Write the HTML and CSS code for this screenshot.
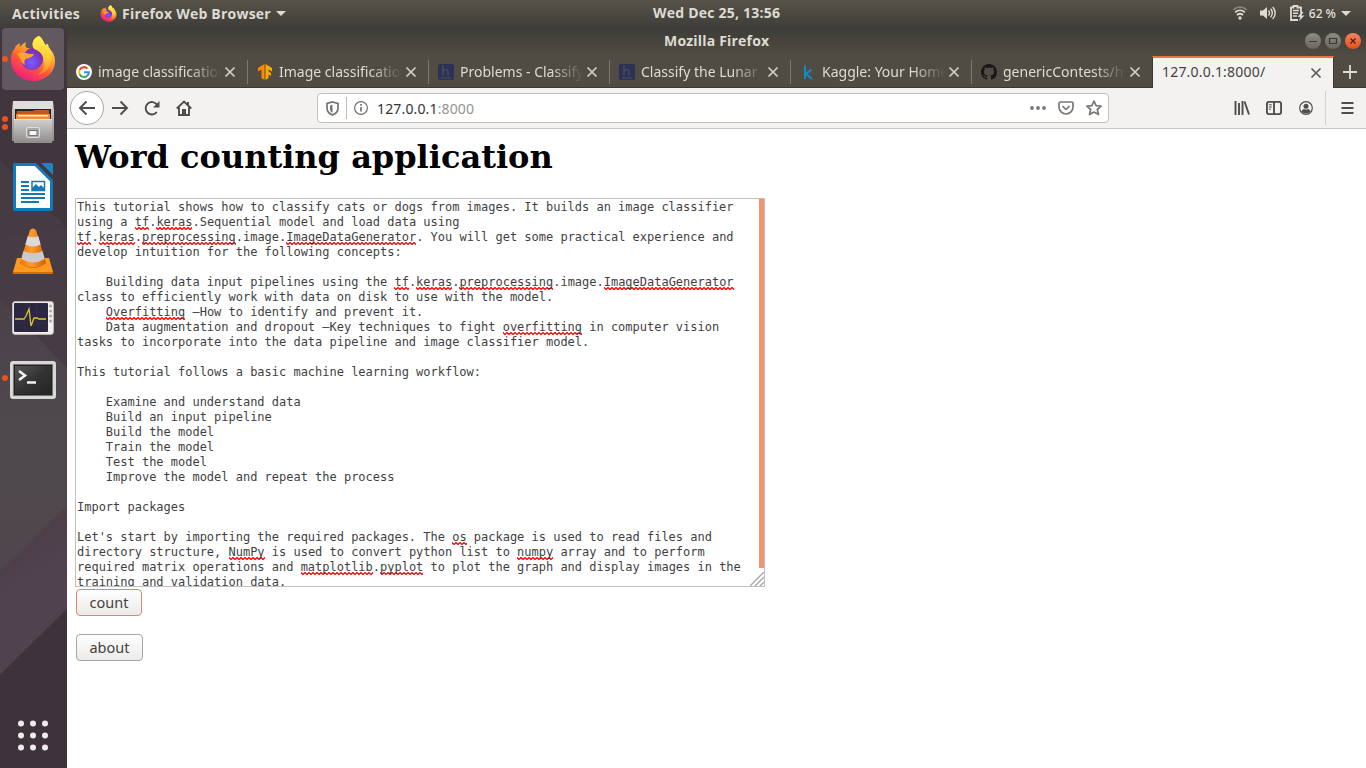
FILE: index.html
```html
<!DOCTYPE html>
<html lang="en">
<head>
<meta charset="utf-8">
<title>127.0.0.1:8000/</title>
<link rel="stylesheet" href="styles.css">
</head>
<body>
<svg class="defs" width="0" height="0" aria-hidden="true">
  <defs>
    <linearGradient id="ffBody" x1="0.8" y1="0" x2="0.25" y2="1"><stop offset="0" stop-color="#fff44f"/><stop offset=".35" stop-color="#ffb02a"/><stop offset=".62" stop-color="#ff5a36"/><stop offset="1" stop-color="#f0148a"/></linearGradient>
    <radialGradient id="ffGlobe" cx=".45" cy=".65" r=".6"><stop offset="0" stop-color="#7a5cff"/><stop offset="1" stop-color="#7b2bb0"/></radialGradient>
    <linearGradient id="ffTail" x1="0.5" y1="0" x2="0.5" y2="1"><stop offset="0" stop-color="#fff44f"/><stop offset=".6" stop-color="#ffc733"/><stop offset="1" stop-color="#ff7b35"/></linearGradient>
    <linearGradient id="steel" x1="0" y1="0" x2="0" y2="1"><stop offset="0" stop-color="#d2d1d0"/><stop offset="1" stop-color="#8d8c8b"/></linearGradient>
    <linearGradient id="cone" x1="0" y1="0" x2="1" y2="0"><stop offset="0" stop-color="#f07800"/><stop offset=".45" stop-color="#ff9b2a"/><stop offset="1" stop-color="#d65c00"/></linearGradient>
    <linearGradient id="screen" x1="0" y1="0" x2="1" y2="1"><stop offset="0" stop-color="#555"/><stop offset=".5" stop-color="#333"/><stop offset="1" stop-color="#252525"/></linearGradient>
    <symbol id="firefox" viewBox="0 0 46 47">
      <path fill="url(#ffBody)" d="M29 1c3 2 5 6 6 9l3-1c0 2 1 4 2 5 3 3 5 7 5 12 0 12-10 20-22 20S1 37 1 25c0-5 1-9 4-12 0-2 3-4 5-5-1 2 0 3 0 4 1-2 4-4 6-5-1 3-1 5 1 6l7 1c-3-5-1-11 5-13z"/>
      <path fill="url(#ffGlobe)" d="M23 13c7 0 10 5 10 11s-5 11-11 11-10-4-10-9 4-13 11-13z"/>
      <path fill="#ffa52a" d="M7 19c4-3 9-1 12 0h5c-1 3-5 4-8 5-2 1-2 3-1 6-4-2-4-7-8-11z"/>
      <path fill="url(#ffTail)" d="M29 1c3 2 5 6 6 9l3-1c0 2 1 4 2 5 2 5 3 12-1 18-2 4-7 7-11 8 5-4 8-11 5-18-2-5-6-7-9-8-3-5-1-11 5-13z"/>
    </symbol>
    <symbol id="x" viewBox="0 0 12 12"><path d="M1.5 1.5l9 9m0-9l-9 9" fill="none" stroke="currentColor" stroke-width="1.7"/></symbol>
  </defs>
</svg>

<header class="topbar">
  <span class="activities">Activities</span>
  <div class="appmenu">
    <svg width="17" height="17"><use href="#firefox"/></svg>
    <span>Firefox Web Browser</span>
    <i class="caret"></i>
  </div>
  <span class="clock">Wed Dec 25, 13:56</span>
  <div class="status">
    <svg class="wifi" width="14" height="14" viewBox="0 0 14 14" fill="none" stroke="#dfdbd2" stroke-width="1.7"><path stroke="#88857e" d="M.5 3.8C4 .2 10 .2 13.500 3.800"/><path d="M2.200 6.400c2.800-2.600 6.800-2.600 9.600 0M4 9c1.800-1.500 4.200-1.500 6 0"/><circle cx="7" cy="12" r="1.7" fill="#dfdbd2" stroke="none"/></svg>
    <svg class="vol" width="16" height="14" viewBox="0 0 16 14" fill="none" stroke="#dfdbd2" stroke-width="1.400"><path fill="#dfdbd2" stroke="none" d="M0 4.500h3L7 1v12L3 9.500H0z"/><path d="M8.500 4.500q2 2.500 0 5M10.600 2.800q3.400 4.200 0 8.400M12.700 1q5 6 0 12"/></svg>
    <svg class="bat" width="15" height="16" viewBox="0 0 15 16" fill="none" stroke="#dfdbd2" stroke-width="1.800"><path d="M8 15H1V2.500h2.500V1h4v1.500H11V8"/><path d="M3 5.500h6M3 8.200h5M3 11h4" stroke-width="1.500"/><path fill="#dfdbd2" stroke="none" d="M11.500 7L7.500 12h2.800L9 16l5.500-5.500h-3.200L13.500 7z"/></svg>
    <span class="pct">62 %</span>
    <i class="caret"></i>
  </div>
</header>

<div class="desktop">
  <nav class="dock">
    <svg class="wall" width="67" height="740" viewBox="0 28 67 740" preserveAspectRatio="none">
      <defs><linearGradient id="grey" x1="0" y1="300" x2="0" y2="560" gradientUnits="userSpaceOnUse"><stop offset="0" stop-color="#4a4148"/><stop offset=".5" stop-color="#4f494e"/><stop offset="1" stop-color="#4f474c"/></linearGradient>
      <linearGradient id="plum" x1="20" y1="545" x2="45" y2="585" gradientUnits="userSpaceOnUse"><stop offset="0" stop-color="#4d4049"/><stop offset="1" stop-color="#514250"/></linearGradient></defs>
      <path fill="#42363e" d="M0 28h67v740H0z"/>
      <path fill="#463a43" d="M0 160l67 68v140L0 298z"/>
      <path fill="url(#grey)" d="M0 298l67 70v150L0 575z"/>
      <path fill="#4b4148" d="M67 228v130L38 330 0 298v-60z" opacity=".35"/>
      <path fill="url(#plum)" d="M0 571l67-65v103L0 675z"/>
      <path fill="#3f333b" d="M0 675l67-66v159H0z"/>
    </svg>
    <div class="item active"><i class="dot"></i><svg width="46" height="47"><use href="#firefox"/></svg></div>
    <div class="item files"><i class="dot"></i><i class="dot low"></i>
      <svg width="42" height="44" viewBox="0 0 42 44"><path fill="url(#steel)" d="M1 1h40l1 8v31H0V9z"/><path fill="#dededd" d="M1 0h40v2L40 8H2L1 2z"/><path fill="#2b2320" d="M3 8h36v11H3z"/><path fill="#c4551e" d="M5 10h16l2-1h14v9H4z"/><path fill="#ed8c3e" d="M4 13h34v5H4z"/><path fill="#ffe8c4" d="M6 14h30v1.500H6z"/><path fill="url(#steel)" d="M2 18h38v24H2z"/><path fill="#e4e4e3" d="M2 18h38v1H2z"/><rect x="14.500" y="26.500" width="13" height="10" rx="1.500" fill="#aaa" stroke="#dedede"/><rect x="17" y="29.500" width="8" height="5" fill="#f4f4f4" stroke="#777"/></svg>
    </div>
    <div class="item"><svg width="40" height="48" viewBox="0 0 40 48"><path fill="#107bbc" d="M2 0h21l17 17v29a2 2 0 0 1-2 2H2a2 2 0 0 1-2-2V2a2 2 0 0 1 2-2z"/><path fill="#fff" d="M3 3h19l15 15v27H3z"/><path fill="#43373f" d="M23 0h6l11 12v6z"/><path fill="#1b85c5" d="M28 0h10a2 2 0 0 1 2 2v10z"/><path fill="none" stroke="#107bbc" stroke-width="2.500" d="M22 1l17 17"/><path stroke="#1479b4" stroke-width="2" d="M8 19h8M8 23h8M8 27h8M8 31h24M8 35h24M8 39h18"/><path fill="#fff" stroke="#1479b4" stroke-width="1.500" d="M19 18.500h12.500v9H19z"/><path fill="#1479b4" d="M19 27v-2l4-4 3 3 2-2 4 4v1z"/></svg></div>
    <div class="item"><svg width="42" height="48" viewBox="0 0 42 48"><path fill="#ff9a1e" d="M5 31h32l4 14v2H1v-2z"/><path fill="#d96a00" d="M1 45h40v2H1z"/><path fill="#bd5300" d="M8 36q13 10 26 0l-2-5H10z"/><path fill="url(#cone)" d="M18 3q3-3 6 0l10 33q-13 9-26 0z"/><path fill="#dbdbd9" d="M15.800 9q5.200 2.500 10.400 0l2.500 8.500q-7.700 4-15.400 0z"/><path fill="#c9cac9" d="M11.500 24q9.500 4.500 19 0l2.200 8q-11.700 7-23.400 0z"/></svg></div>
    <div class="item monitor"><svg width="42" height="34" viewBox="0 0 42 34"><rect x=".7" y=".7" width="40.600" height="32.600" rx="2" fill="#f1f0ed" stroke="#c9c7c2"/><rect x="2" y="2" width="34" height="29" rx="1" fill="#2c2740"/><path d="M2 12h34M2 22h34M13 2v29M25 2v29" stroke="#332d48"/><path fill="none" stroke="#d7c632" stroke-width="1.300" d="M3 18h9l2-3 3-7 2 17 3-8h3l2 1h7"/><g fill="#aaa8a3"><circle cx="38.500" cy="5" r="1.500"/><circle cx="38.500" cy="10" r="1.500"/><circle cx="38.500" cy="15" r="1.500"/><circle cx="38.500" cy="20" r="1.500"/></g></svg></div>
    <div class="item terminal"><i class="dot"></i><svg width="46" height="38" viewBox="0 0 46 38"><rect x=".7" y=".7" width="44.600" height="36.600" rx="1.500" fill="#d5d5d3" stroke="#efefee"/><path fill="#222" stroke="#777" d="M3.500 3.500h39v31h-39z"/><path fill="url(#screen)" d="M5 5h36v28H5z"/><path fill="none" stroke="#f1f1f1" stroke-width="2.600" d="M9 10l6 4.500L9 19M17 21.500h9"/></svg></div>
    <svg class="grid" width="31" height="31" viewBox="0 0 31 31" fill="#eeedeb"><circle cx="4" cy="3.500" r="3"/><circle cx="16" cy="3.500" r="3"/><circle cx="28" cy="3.500" r="3"/><circle cx="4" cy="15.500" r="3"/><circle cx="16" cy="15.500" r="3"/><circle cx="28" cy="15.500" r="3"/><circle cx="4" cy="27.500" r="3"/><circle cx="16" cy="27.500" r="3"/><circle cx="28" cy="27.500" r="3"/></svg>
  </nav>

  <main class="window">
    <div class="titlebar"><span>Mozilla Firefox</span>
      <div class="controls">
        <svg width="16" height="16" viewBox="0 0 16 16"><path d="M4 8.500h8"/></svg>
        <svg width="16" height="16" viewBox="0 0 16 16"><path d="M4.500 5.500h7v5h-7z" fill="none"/></svg>
        <svg class="close" width="16" height="16" viewBox="0 0 16 16"><path d="M5.500 5.500l5 5m0-5l-5 5"/></svg>
      </div>
    </div>
    <div class="tabs">
      <div class="tab first"><svg width="16" height="16" viewBox="0 0 16 16"><circle cx="8" cy="8" r="8" fill="#fff"/><g fill="none" stroke-width="2"><path stroke="#ea4335" d="M3.600 5.900A4.900 4.900 0 0 1 11.500 4.600"/><path stroke="#fbbc05" d="M3.600 5.900a4.900 4.900 0 0 0 0 4.300"/><path stroke="#34a853" d="M3.600 10.200a4.900 4.900 0 0 0 7.700 1.500"/><path stroke="#4285f4" d="M8 8.200h4.900q0 2-1.600 3.500"/></g></svg><span class="label">image classification</span><svg class="x" width="12" height="12"><use href="#x"/></svg></div>
      <div class="tab"><svg width="16" height="16" viewBox="0 0 16 16"><path fill="#ff8a00" d="M7.500 0v16L4.500 14V5.500L1 7.500V4z"/><path fill="#ffa800" d="M8.500 0L15 4v3.500l-3.500-2v2L14 9v3l-2.500-1.500V14l-3 2z"/></svg><span class="label">Image classification</span><svg class="x" width="12" height="12"><use href="#x"/></svg></div>
      <div class="tab"><b class="hfav"><svg width="16" height="16" viewBox="0 0 16 16" fill="none" stroke="#56534e" stroke-width="1.200"><path d="M5 1.500v10M5 7q3-3 5 0v4.500M3 14h10"/></svg></b><span class="label">Problems - Classify</span><svg class="x" width="12" height="12"><use href="#x"/></svg></div>
      <div class="tab"><b class="hfav"><svg width="16" height="16" viewBox="0 0 16 16" fill="none" stroke="#56534e" stroke-width="1.200"><path d="M5 1.500v10M5 7q3-3 5 0v4.500M3 14h10"/></svg></b><span class="label">Classify the Lunar</span><svg class="x" width="12" height="12"><use href="#x"/></svg></div>
      <div class="tab"><svg width="16" height="16" viewBox="0 0 16 16" fill="none" stroke="#0c8fc4" stroke-width="2"><path d="M5 1.500V15M11.500 5.500L6 10l6 5"/></svg><span class="label">Kaggle: Your Home</span><svg class="x" width="12" height="12"><use href="#x"/></svg></div>
      <div class="tab"><svg width="16" height="16" viewBox="0 0 16 16"><path fill="#191717" d="M8 0C3.580 0 0 3.580 0 8c0 3.540 2.290 6.530 5.470 7.590.4.070.55-.17.55-.38 0-.19-.01-.82-.01-1.490-2.010.37-2.530-.49-2.690-.94-.09-.23-.48-.94-.82-1.130-.28-.15-.68-.52-.01-.53.63-.01 1.080.58 1.230.82.72 1.210 1.870.87 2.330.66.070-.52.28-.87.51-1.070-1.780-.2-3.640-.89-3.640-3.950 0-.87.31-1.590.82-2.150-.08-.2-.36-1.020.08-2.120 0 0 .67-.21 2.200.82.64-.18 1.320-.27 2-.27s1.360.09 2 .27c1.530-1.040 2.200-.82 2.200-.82.44 1.100.16 1.920.08 2.120.51.56.82 1.270.82 2.150 0 3.070-1.870 3.750-3.650 3.950.29.25.54.73.54 1.480 0 1.070-.01 1.930-.01 2.200 0 .21.15.46.55.38A8.010 8.010 0 0 0 16 8c0-4.420-3.580-8-8-8z"/></svg><span class="label">genericContests/h</span><svg class="x" width="12" height="12"><use href="#x"/></svg></div>
      <div class="tab current"><span class="label">127.0.0.1:8000/</span><svg class="x" width="12" height="12"><use href="#x"/></svg></div>
      <div class="newtab"><svg width="14" height="14" viewBox="0 0 14 14"><path d="M7 0v14M0 7h14" stroke="#dfdbd2" stroke-width="1.800"/></svg></div>
    </div>

    <div class="toolbar">
      <div class="navs">
        <span class="back"><svg width="18" height="16" viewBox="0 0 18 16"><path d="M17 8H2M8.500 1.500L2 8l6.500 6.500"/></svg></span>
        <svg class="fwd" width="18" height="16" viewBox="0 0 18 16"><path d="M1 8h15M9.500 1.500L16 8l-6.500 6.500"/></svg>
        <svg class="reload" width="16" height="16" viewBox="0 0 16 16"><path d="M12.800 12A6.200 6.200 0 1 1 13 4.800"/><path class="solid" d="M15.500 1v6.500H9z"/></svg>
        <svg class="home" width="16" height="16" viewBox="0 0 16 16"><path d="M.8 8.500L8 1.500l7.200 7M3 7.500V15h10V7.500"/><path class="solid" d="M6 9h4v6H6zM11 2h2v4l-2-2z"/></svg>
      </div>
      <div class="urlbar">
        <svg class="shield" width="13" height="15" viewBox="0 0 13 15"><path d="M6.500 1L12 2.500V7c0 4-3 6-5.500 7C4 13 1 11 1 7V2.500z" fill="none" stroke="#737373" stroke-width="1.700"/><path d="M6.500 3.800L4 4.500V8c0 2 1 3 2.500 4z" fill="#737373"/></svg>
        <i class="sep"></i>
        <svg class="info" width="14" height="14" viewBox="0 0 14 14" fill="none"><circle cx="7" cy="7" r="6.400"/><path stroke-width="1.700" d="M7 6v4.500M7 3v1.800"/></svg>
        <span class="url"><b>127.0.0.1</b>:8000</span>
        <svg class="more" width="16" height="4" viewBox="0 0 16 4"><circle cx="2" cy="2" r="1.900"/><circle cx="8" cy="2" r="1.900"/><circle cx="14" cy="2" r="1.900"/></svg>
        <svg class="pocket" width="16" height="14" viewBox="0 0 16 14"><path d="M2.500 1h11q1.500 0 1.500 1.500V6A7 7 0 0 1 1 6V2.500Q1 1 2.500 1z"/><path d="M4.500 5.200L8 8.500l3.500-3.300"/></svg>
        <svg class="star" width="16" height="16" viewBox="0 0 16 16"><path d="M8 1l2.100 4.600 5 .5-3.800 3.400 1.200 5L8 12l-4.500 2.500 1.200-5L.9 6.100l5-.5z"/></svg>
      </div>
      <div class="tools">
        <svg width="16" height="14" viewBox="0 0 16 14"><path d="M1.500 0v14M5 2v12M8.500 0v14M10.500 .5L15 13.500"/></svg>
        <svg width="16" height="14" viewBox="0 0 16 14"><rect x=".9" y=".9" width="14.200" height="12.200" rx="2"/><path d="M8 1v12"/><path stroke-width="1" d="M2.800 3.800h3M2.800 6h3M2.800 8.200h2"/></svg>
        <svg width="14" height="14" viewBox="0 0 14 14"><circle class="ring" cx="7" cy="7" r="6.300"/><circle class="solid" cx="7" cy="5.300" r="2.500"/><path class="solid" d="M2.500 10.500Q3 8 5 8q2 1 4 0 2 0 2.500 2.500-4.500 4-9 0z"/></svg>
        <i class="toolsep"></i>
        <svg class="menu" width="13" height="12" viewBox="0 0 13 12"><path d="M.5 1h12M.5 6h12M.5 11h12"/></svg>
      </div>
    </div>

    <section class="page">
      <h1>Word counting application</h1>
      <div class="editor"><div class="text">This tutorial shows how to classify cats or dogs from images. It builds an image classifier
using a <u>tf</u>.<u>keras</u>.Sequential model and load data using
<u>tf</u>.<u>keras</u>.<u>preprocessing</u>.image.<u>ImageDataGenerator</u>. You will get some practical experience and
develop intuition for the following concepts:

    Building data input pipelines using the <u>tf</u>.<u>keras</u>.<u>preprocessing</u>.image.<u>ImageDataGenerator</u>
class to efficiently work with data on disk to use with the model.
    <u>Overfitting</u> —How to identify and prevent it.
    Data augmentation and dropout —Key techniques to fight <u>overfitting</u> in computer vision
tasks to incorporate into the data pipeline and image classifier model.

This tutorial follows a basic machine learning workflow:

    Examine and understand data
    Build an input pipeline
    Build the model
    Train the model
    Test the model
    Improve the model and repeat the process

Import packages

Let's start by importing the required packages. The <u>os</u> package is used to read files and
directory structure, <u>NumPy</u> is used to convert python list to <u>numpy</u> array and to perform
required matrix operations and <u>matplotlib</u>.<u>pyplot</u> to plot the graph and display images in the
training and validation data.</div>
        <div class="scroll"><i class="thumb"></i></div>
        <svg class="grip" width="14" height="14" viewBox="0 0 14 14"><path d="M0 14L14 0M5 14l9-9M10 14l4-4" stroke="#aaa" stroke-width="1.500"/></svg>
      </div>
      <button class="btn count">count</button>
      <button class="btn about">about</button>
    </section>
  </main>
</div>
</body>
</html>
```
FILE: styles.css
```css
* { box-sizing: border-box; }
body { margin: 0; width: 1366px; height: 768px; overflow: hidden; background: #fff; font-family: "Noto Sans", "Open Sans", sans-serif; font-size: 14px; }
svg { display: block; flex: none; }
.defs { position: absolute; }

.topbar { height: 28px; display: grid; grid-template-columns: 88px 1fr auto 1fr; align-items: center; padding: 0 15px 2px 12px; color: #dfdbd2; background: linear-gradient(#57534a, #3e3d38); font-family: "Open Sans", sans-serif; font-weight: 700; font-size: 14px; white-space: nowrap; position: relative; }
.activities { letter-spacing: .3px; }
.appmenu { display: flex; align-items: center; gap: 5px; letter-spacing: .22px; }
.caret { width: 0; border: 5px solid transparent; border-top-color: #dfdbd2; border-bottom: 0; }
.clock { position: absolute; left: 653px; top: 3px; letter-spacing: .22px; }
.status { grid-column: 4; display: flex; justify-content: flex-end; align-items: center; }
.vol { margin-left: 13px; }
.bat { margin-left: 14px; }
.pct { margin: 0 5px 0 4px; font-size: 12px; font-weight: 600; }

.desktop { display: flex; height: 740px; }
.dock { width: 67px; position: relative; display: flex; flex-direction: column; align-items: flex-start; gap: 1px; background: #42363e; }
.wall { position: absolute; inset: 0; }
.item { position: relative; width: 62px; height: 62px; margin-left: 2px; display: flex; align-items: center; justify-content: center; border-radius: 4px; }
.item + .item { height: 63px; }
.active svg { margin-bottom: 2px; }
.active { background: #625860; }
.monitor { padding-top: 6px; }
.terminal { padding-top: 3px; }
.dot { position: absolute; left: 0; top: 28px; width: 6px; height: 6px; border-radius: 50%; background: #e95420; }
.files .dot { top: 25px; }
.files .dot.low { top: 33px; }
.grid { position: absolute; left: 17px; bottom: 17px; }

.window { flex: 1; display: flex; flex-direction: column; background: #fff; }
.titlebar { height: 28px; display: flex; align-items: center; padding: 0 0 4px 597px; color: #dfdbd2; background: linear-gradient(#3d3c37, #504c43); font-family: "Open Sans", sans-serif; font-weight: 700; font-size: 14px; position: relative; }
.titlebar span { letter-spacing: .2px; }
.controls { position: absolute; right: 5px; top: 5px; display: flex; gap: 4px; }
.controls svg { border-radius: 50%; background: linear-gradient(#8e8b84, #6a6761); stroke: #3a3935; stroke-width: 1.2; }
.controls .close { background: linear-gradient(#f58460, #e4501d); stroke: #4d2010; }

.tabs { height: 32px; display: flex; background: #504c43; color: #dfdbd2; border-bottom: 1px solid #393733; }
.tab { position: relative; width: 181px; flex: none; display: flex; align-items: center; padding: 0 12px 0 9px; gap: 6px; }
.tab + .tab:not(.current)::before { content: ""; position: absolute; left: -1px; top: 4px; height: 24px; border-left: 1px solid #7c7971; }
.label { flex: 1; margin-right: -3px; overflow: hidden; white-space: nowrap; font-size: 14px; -webkit-mask-image: linear-gradient(90deg, #000 74%, transparent 100%); mask-image: linear-gradient(90deg, #000 74%, transparent 100%); }
.x { color: #d3d0c8; }
.hfav { width: 16px; height: 16px; background: #2b3258; border-radius: 2px; overflow: hidden; }
.current { width: 182px; height: 32px; margin: 0 0 -1px -1px; background: #f3f2f0; color: #45423f; border: 1px solid #393733; border-width: 0 1px; border-top: 2px solid #ed7442; padding: 0 11px 3px 9px; }
.current .x { color: #5d5a57; margin-top: 2px; }
.current .label { letter-spacing: .2px; -webkit-mask-image: none; mask-image: none; }
.newtab { display: flex; align-items: center; margin-left: 9px; }

.toolbar { height: 41px; display: flex; align-items: center; background: #f3f2f0; border-bottom: 1px solid #c9c7c5; }
.toolbar svg { stroke: #4f4d4b; fill: none; stroke-width: 1.9; }
.toolbar .solid { fill: #4f4d4b; stroke: none; }
.toolbar .ring { stroke-width: 1.2; }
.navs { display: flex; align-items: center; width: 250px; padding-left: 3px; }
.back { width: 34px; height: 34px; border: 1px solid #aaa8a6; border-radius: 50%; background: #fff; display: flex; align-items: center; justify-content: center; }
.fwd { margin-left: 7px; }
.reload { margin-left: 15px; }
.home { margin-left: 16px; }
.urlbar { width: 792px; height: 30px; display: flex; align-items: center; background: #fff; border: 1px solid #c4c2c0; border-radius: 4px; padding: 0 6px 0 8px; }
.urlbar .shield { stroke: none; }
.urlbar .info { stroke: #737373; stroke-width: 1.2; }
.urlbar .more { fill: #777; stroke: none; }
.urlbar .pocket, .urlbar .star { stroke: #777; stroke-width: 1.7; stroke-linejoin: round; }
.sep { height: 22px; border-left: 1px solid #bdbbb9; margin: 0 7px; }
.url { flex: 1; margin-left: 9px; color: #959391; font-size: 14px; letter-spacing: .15px; }
.url b { font-weight: 400; color: #333; }
.pocket { margin-left: 12px; }
.star { margin-left: 12px; }
.tools { flex: 1; display: flex; align-items: center; padding-left: 125px; gap: 16px; }
.tools svg:nth-child(3) { margin-left: 1px; }
.toolsep { height: 34px; border-left: 1px solid #d4d2d0; margin-left: -4px; }
.tools .menu { margin-left: -1px; }

.page { padding: 8px; display: flex; flex-direction: column; align-items: flex-start; }
h1 { margin: 0 0 21px; font: bold 32px/40px "DejaVu Serif", serif; color: #000; white-space: nowrap; }
.editor { position: relative; width: 690px; height: 389px; border: 1px solid #c0bfbe; overflow: hidden; background: #fff; }
.text { padding: 1px; white-space: pre; font: 12px/15px "DejaVu Sans Mono", monospace; letter-spacing: -.01px; color: #3f3f3f; }
.text u { text-decoration: none; padding-bottom: 1px; background: url("data:image/svg+xml,%3Csvg xmlns='http://www.w3.org/2000/svg' width='4' height='3' viewBox='0 0 4 3'%3E%3Cpath d='M-1 1.500L0 0.500L2 2.500L4 0.500L5 1.500' fill='none' stroke='%23f00' stroke-width='1.25'/%3E%3C/svg%3E") repeat-x left bottom; }
.scroll { position: absolute; right: 0; top: 0; width: 5px; height: 369px; }
.thumb { display: block; height: 100%; background: #f29470; }
.grip { position: absolute; right: 0; bottom: 0; }
.btn { height: 27px; border: 1px solid #a9a7a5; border-radius: 4px; background: linear-gradient(#fff, #ebeae9); color: #45423f; font: 14.5px/20px "Noto Sans", sans-serif; padding: 0 0 1px; margin-left: 1px; }
.count { width: 66px; margin-top: 2px; border-color: #d98a6c; }
.about { width: 67px; margin-top: 18px; }
```
